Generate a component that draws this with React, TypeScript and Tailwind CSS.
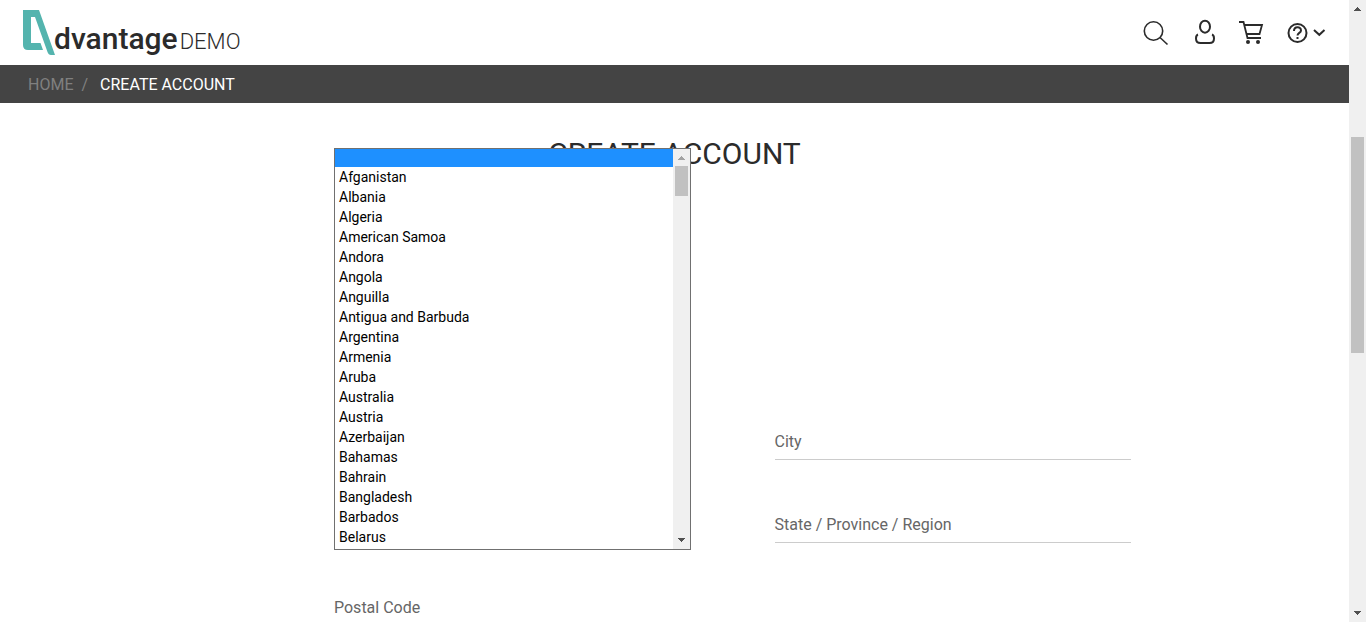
import React from "react";

const countries = [
  "Afganistan", "Albania", "Algeria", "American Samoa", "Andora", "Angola", "Anguilla",
  "Antigua and Barbuda", "Argentina", "Armenia", "Aruba", "Australia", "Austria",
  "Azerbaijan", "Bahamas", "Bahrain", "Bangladesh", "Barbados", "Belarus",
];

function Arrow({ up, dim }: { up?: boolean; dim?: boolean }) {
  return (
    <svg
      className={dim ? "h-[17px] w-[17px] shrink-0 fill-[#a3a3a3]" : "h-[17px] w-[17px] shrink-0 fill-[#505050]"}
      viewBox="0 0 17 17"
      shapeRendering="crispEdges"
      aria-hidden="true"
    >
      {up ? (
        <path d="M8 7h1v1h1v1h1v1h1v1H5v-1h1V9h1V8h1z" />
      ) : (
        <path d="M5 6h7v1h-1v1h-1v1H9v1H8V9H7V8H6V7H5z" />
      )}
    </svg>
  );
}

function Logo() {
  return (
    <a href="#" className="flex items-start font-[Roboto,sans-serif] text-[#2b2b2b]" aria-label="Advantage DEMO">
      <svg className="mt-[10px] h-[45px] w-8" viewBox="0 0 32 45" fill="#54b4ae" aria-hidden="true">
        <path d="M0 0H16L32 45H28Q25.500 45 24.500 42L12 7H8V33H17.500L20 40H5Q0 40 0 35Z" />
      </svg>
      <span className="-ml-px mt-[21px] text-[30px] leading-[36px] font-medium">dvantage</span>
      <span className="ml-[2px] mt-[25px] text-[22px] leading-[34px] font-light">DEMO</span>
    </a>
  );
}

function Field({ id, label }: { id: string; label: string }) {
  return (
    <div className="grid h-[83px] content-end">
      <input
        id={id}
        type="text"
        className="col-start-1 row-start-1 h-[38px] w-full border-b border-[#cccccc] bg-transparent text-base outline-none"
      />
      <label
        htmlFor={id}
        className="pointer-events-none col-start-1 row-start-1 self-center pt-[2px] text-base leading-5 text-[#666666]"
      >
        {label}
      </label>
    </div>
  );
}

export default function App() {
  return (
    <div className="flex h-screen overflow-hidden bg-white font-[Roboto,sans-serif]">
      <div className="min-w-0 flex-1 overflow-hidden">
        <header className="flex h-[65px] items-start justify-between pr-[23px] pl-[23px]">
          <Logo />
          <nav className="flex items-start text-[#2b2b2b]">
            <button type="button" aria-label="Search" className="mt-[20px] mr-[25px]">
              <svg className="h-[26px] w-[26px]" viewBox="0 0 26 26" fill="none" stroke="currentColor" strokeWidth="1.6">
                <circle cx="10.5" cy="11" r="9.2" />
                <path d="M17 17.5L24.5 24.5" />
              </svg>
            </button>
            <button type="button" aria-label="User" className="mt-[19px] mr-[23px]">
              <svg className="h-[26px] w-[22px]" viewBox="0 0 22 26" fill="none" stroke="currentColor" strokeWidth="2">
                <ellipse cx="11" cy="7.7" rx="5" ry="6" />
                <path d="M4 15.5C2.5 16 2 17.5 2 19.5C2 22.5 3.5 24 6.5 24H15.5C18.5 24 20 22.5 20 19.5C20 17.5 19.5 16 18 15.5" />
              </svg>
            </button>
            <button type="button" aria-label="Cart" className="mt-[20px] mr-[23px]">
              <svg className="h-[25px] w-[25px]" viewBox="0 0 25 25" fill="none" stroke="currentColor" strokeWidth="1.8">
                <path d="M0 2H4.5L8.5 18H22M5 5H23L20.5 14H7.500" />
                <circle cx="9" cy="22" r="2" fill="currentColor" stroke="none" />
                <circle cx="19" cy="22" r="2" fill="currentColor" stroke="none" />
              </svg>
            </button>
            <button type="button" aria-label="Help" className="mt-[22px] flex items-center">
              <svg className="h-[22px] w-[39px]" viewBox="0 0 39 22" fill="none" stroke="currentColor" strokeWidth="2">
                <circle cx="10.5" cy="11" r="9" />
                <path d="M7 9C7 4.2 14 4.2 14 8.4C14 10.800 10.5 11 10.5 13.5M10.5 15V17" />
                <path d="M27 8L32.3 12.800L37.5 8" />
              </svg>
            </button>
          </nav>
        </header>

        <nav className="flex h-[38px] items-center bg-[#444444] px-7 pt-[2px] text-base" aria-label="Breadcrumb">
          <a href="#" className="text-[#808080]">HOME</a>
          <span className="ml-2 text-[#808080]">/</span>
          <span className="ml-3 text-white">CREATE ACCOUNT</span>
        </nav>

        <main className="pt-[33px]">
          <h1 className="text-center text-[30px] leading-9 font-normal text-[#2b2b2b]">CREATE ACCOUNT</h1>
          <form className="mx-auto mt-[205px] grid max-w-[913px] grid-cols-2 gap-x-[84px] pl-[116px]">
            <div className="relative row-span-2">
              <div className="absolute inset-x-0 -top-[229px] z-10 flex h-[402px] border border-[#707070] bg-white">
                <select
                  size={20}
                  defaultValue=""
                  aria-label="Country"
                  className="h-[400px] min-w-0 flex-1 appearance-none overflow-hidden border-0 bg-white p-0 text-sm text-black outline-none"
                >
                  <option
                    value=""
                    className="mb-[2px] block h-[18px] min-h-0 bg-[#1e90ff] p-0 checked:bg-[linear-gradient(#1e90ff,#1e90ff)]"
                  />
                  {countries.map((name) => (
                    <option key={name} value={name} className="h-5 px-1 py-0 leading-5">
                      {name}
                    </option>
                  ))}
                </select>
                <div className="flex w-[17px] flex-col justify-between bg-[#f0f0f0]">
                  <div>
                    <Arrow up dim />
                    <div className="mx-[2px] h-[30px] bg-[#c1c1c1]" />
                  </div>
                  <Arrow />
                </div>
              </div>
            </div>
            <Field id="city" label="City" />
            <Field id="region" label="State / Province / Region" />
            <Field id="postal" label="Postal Code" />
          </form>
        </main>
      </div>

      <div className="flex w-[17px] shrink-0 flex-col justify-between bg-[#f0f0f0]">
        <div>
          <Arrow up />
          <div className="mx-[2px] mt-[120px] h-[216px] bg-[#c1c1c1]" />
        </div>
        <Arrow />
      </div>
    </div>
  );
}
